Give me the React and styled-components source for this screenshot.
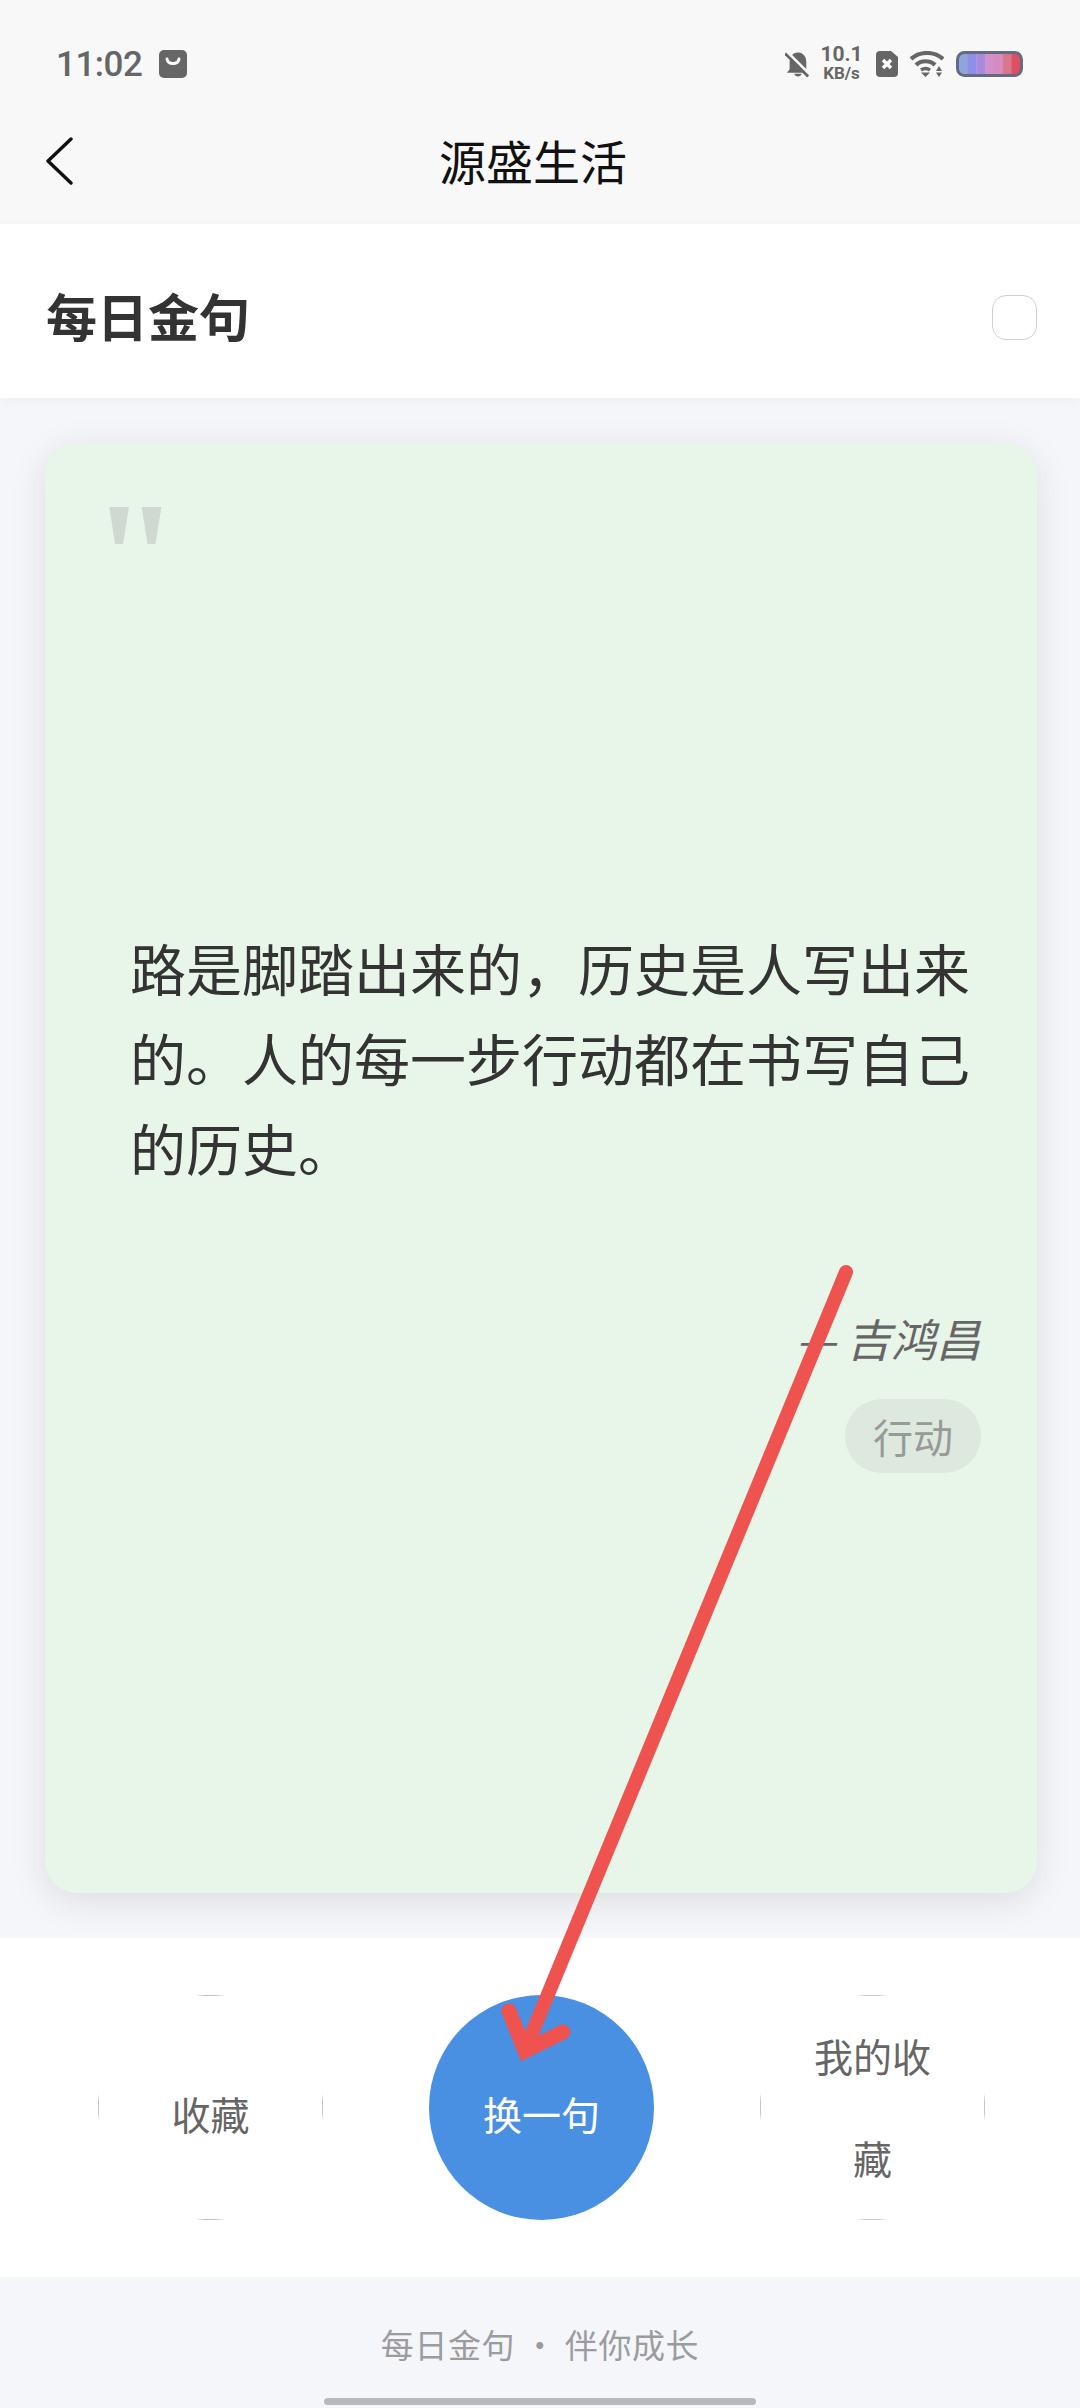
import styled, { createGlobalStyle } from "styled-components";

const GLOBAL = createGlobalStyle`
    html, body {
        margin: 0;
        padding: 0;
        background: #f5f6fa;
    }
    * {
        box-sizing: border-box;
    }
`

const PAGE = styled.div`
    position: relative;
    display: flex;
    flex-direction: column;
    width: 1080px;
    height: 2408px;
    overflow: hidden;
    background: #f5f6fa;
    font-family: "Noto Sans CJK SC", "Noto Sans", sans-serif;
`

const TOPBAR = styled.div`
    display: flex;
    flex-direction: column;
    height: 224px;
    background: #f8f8f8;
`

const STATUSBAR = styled.div`
    display: flex;
    align-items: center;
    justify-content: space-between;
    height: 96px;
    padding: 32px 57px 0 56px;
`

const STATUSLEFT = styled.div`
    display: flex;
    align-items: center;
    gap: 18px;
`

const TIME = styled.span`
    width: 85px;
    font-family: Roboto, sans-serif;
    font-size: 35px;
    font-weight: 500;
    letter-spacing: -0.5px;
    color: #666;
`

const STATUSRIGHT = styled.div`
    display: flex;
    align-items: center;
    gap: 12px;
`

const SPEED = styled.div`
    display: flex;
    flex-direction: column;
    align-items: center;
    width: 39px;
    margin-right: 3px;
    font-family: Roboto, sans-serif;
    font-weight: 700;
    color: #666;
    line-height: 19px;
`

const SPEEDVALUE = styled.span`
    font-size: 21px;
`

const SPEEDUNIT = styled.span`
    font-size: 17px;
`

const NAV = styled.div`
    display: flex;
    align-items: center;
    height: 128px;
    padding-left: 46px;
`

const BACK = styled.svg`
    margin-top: 2px;
`

const NAVTITLE = styled.div`
    width: 188px;
    margin-left: 366px;
    font-size: 47px;
    line-height: 60px;
    color: #111;
    white-space: nowrap;
`

const HEADER = styled.div`
    position: relative;
    display: flex;
    align-items: center;
    justify-content: space-between;
    height: 174px;
    padding: 0 43px 0 46px;
    background: #fff;
    box-shadow: 0 2px 12px rgba(0, 0, 0, 0.04);
`

const HEADING = styled.h1`
    margin: 8px 0 0 0;
    font-size: 51px;
    font-weight: 700;
    line-height: 70px;
    color: #333;
`

const CHECK = styled.div`
    width: 45px;
    height: 45px;
    margin-top: 13px;
    border: 1.5px solid #cfcfcf;
    border-radius: 14px;
    background: #fff;
`

const MAIN = styled.div`
    display: flex;
    height: 1540px;
    padding: 45px 43px 45px 45px;
`

const CARD = styled.div`
    position: relative;
    display: flex;
    flex-direction: column;
    justify-content: center;
    width: 100%;
    padding: 59px 56px 0 85px;
    background: #e8f5e9;
    border-radius: 32px;
    box-shadow: 0 8px 36px rgba(0, 0, 0, 0.1);
`

const QUOTEMARK = styled.span`
    position: absolute;
    left: 47px;
    top: 35px;
    font-family: "Liberation Serif", serif;
    font-size: 156px;
    line-height: 160px;
    font-weight: 700;
    color: #cfd9d1;
`

const QUOTE = styled.p`
    margin: 0 0 116px 0;
    font-size: 56px;
    line-height: 90px;
    color: #333;
`

const AUTHOR = styled.div`
    align-self: flex-end;
    font-size: 45px;
    line-height: 60px;
    font-style: italic;
    color: #666;
`

const TAG = styled.span`
    align-self: flex-end;
    display: flex;
    align-items: center;
    justify-content: center;
    width: 136px;
    height: 74px;
    margin-top: 31px;
    border-radius: 37px;
    background: #dde9df;
    font-size: 40px;
    color: #999;
`

const ACTIONS = styled.div`
    position: relative;
    display: flex;
    align-items: center;
    gap: 106px;
    height: 339px;
    padding-left: 98px;
    background: #fff;
`

const ROUND = styled.button`
    position: relative;
    flex: none;
    width: 225px;
    height: 225px;
    padding: ${(props) => props.$single ? "10px 30px 0" : "0 40px 4px"};
    border: none;
    border-radius: 50%;
    background: ${(props) => props.$primary ? "#4a90e2" : "#fff"};
    color: ${(props) => props.$primary ? "#fff" : "#666"};
    font-family: inherit;
    font-size: 39px;
    line-height: 102px;
`

const TICK = styled.i`
    position: absolute;
    ${(props) => props.$side === "top" && "top: 0; left: 97px; width: 30px; height: 1px;"}
    ${(props) => props.$side === "bottom" && "bottom: 0; left: 97px; width: 30px; height: 1px;"}
    ${(props) => props.$side === "left" && "left: 0; top: 98px; width: 1px; height: 28px;"}
    ${(props) => props.$side === "right" && "right: 0; top: 98px; width: 1px; height: 28px;"}
    background: linear-gradient(
        ${(props) => props.$side === "top" || props.$side === "bottom" ? "to right" : "to bottom"},
        transparent, #c4c4c4 30%, #c4c4c4 70%, transparent
    );
`

const FOOTER = styled.div`
    position: relative;
    display: flex;
    justify-content: center;
    height: 131px;
    padding-top: 43px;
    font-size: 33px;
    line-height: 48px;
    letter-spacing: 0.6px;
    color: #9c9c9f;
    white-space: pre;
`

const HOMEBAR = styled.div`
    position: absolute;
    left: 324px;
    bottom: 3px;
    width: 432px;
    height: 7px;
    border-radius: 4px;
    background: #b8b9bd;
`

const ARROW = styled.svg`
    position: absolute;
    left: 0;
    top: 0;
    pointer-events: none;
`

const BATTERY_BANDS = ["#8fa6dc", "#8e8fe8", "#a98bdc", "#cf90cc", "#d68dbd", "#d5788d", "#df4f62"]

const Ticks = () => (
    <>
        <TICK $side = "top" />
        <TICK $side = "bottom" />
        <TICK $side = "left" />
        <TICK $side = "right" />
    </>
)

function App () {
    return (
        <PAGE>
            <GLOBAL />
            <TOPBAR>
                <STATUSBAR>
                    <STATUSLEFT>
                        <TIME>11:02</TIME>
                        <svg width = "28" height = "28" viewBox = "0 0 28 28">
                            <rect width = "28" height = "28" rx = "5" fill = "#666" />
                            <path d = "M8 9c1 6 11 6 12 0" fill = "none" stroke = "#fff" strokeWidth = "3" strokeLinecap = "round" />
                        </svg>
                    </STATUSLEFT>
                    <STATUSRIGHT>
                        <svg width = "25" height = "27" viewBox = "0 0 27 28">
                            <path d = "M14 1c6 0 9 5 9 10v8l3 4H2l3-4v-8c0-5 3-10 9-10zM10 24h8c-1 4-7 4-8 0z" fill = "#666" />
                            <path d = "M2 0l25 25" stroke = "#f8f8f8" strokeWidth = "3" />
                            <path d = "M0 2l25 25" stroke = "#666" strokeWidth = "3" />
                        </svg>
                        <SPEED>
                            <SPEEDVALUE>10.1</SPEEDVALUE>
                            <SPEEDUNIT>KB/s</SPEEDUNIT>
                        </SPEED>
                        <svg width = "22" height = "26" viewBox = "0 0 22 26">
                            <path d = "M4 0h11l7 6v16a4 4 0 0 1-4 4H4a4 4 0 0 1-4-4V4a4 4 0 0 1 4-4z" fill = "#666" />
                            <path d = "M7 9l8 8M15 9l-8 8" stroke = "#fff" strokeWidth = "3.4" />
                        </svg>
                        <svg width = "34" height = "26" viewBox = "0 0 34 26">
                            <path d = "M1 8c9-8 23-8 32 0" fill = "none" stroke = "#666" strokeWidth = "4.2" />
                            <path d = "M6 14c5-5 14-5 19 0" fill = "none" stroke = "#666" strokeWidth = "4.2" />
                            <path d = "M11 19c3-2 6-2 9 0" fill = "none" stroke = "#666" strokeWidth = "3.6" />
                            <path d = "M11 21.5h9L15.5 26zM29 15l3 5h-6zM26 21.5h6L29 26z" fill = "#666" />
                        </svg>
                        <svg width = "67" height = "26" viewBox = "0 0 67 26">
                            {BATTERY_BANDS.map((color, index) => (
                                <rect key = {index} x = {3 + index * 8.7} y = "2" width = "9" height = "22" fill = {color} />
                            ))}
                            <rect x = "1.5" y = "1.5" width = "64" height = "23" rx = "7" fill = "none" stroke = "#646b80" strokeWidth = "3" />
                        </svg>
                    </STATUSRIGHT>
                </STATUSBAR>
                <NAV>
                    <BACK width = "27" height = "48" viewBox = "0 0 27 48">
                        <path d = "M25 2L2 24l23 22" fill = "none" stroke = "#111" strokeWidth = "3.4" strokeLinecap = "round" strokeLinejoin = "round" />
                    </BACK>
                    <NAVTITLE>源盛生活</NAVTITLE>
                </NAV>
            </TOPBAR>
            <HEADER>
                <HEADING>每日金句</HEADING>
                <CHECK />
            </HEADER>
            <MAIN>
                <CARD>
                    <QUOTEMARK>"</QUOTEMARK>
                    <QUOTE>路是脚踏出来的，历史是人写出来的。人的每一步行动都在书写自己的历史。</QUOTE>
                    <AUTHOR>— 吉鸿昌</AUTHOR>
                    <TAG>行动</TAG>
                </CARD>
            </MAIN>
            <ACTIONS>
                <ROUND $single>收藏<Ticks /></ROUND>
                <ROUND $single $primary>换一句</ROUND>
                <ROUND>我的收藏<Ticks /></ROUND>
            </ACTIONS>
            <FOOTER>每日金句 · 伴你成长</FOOTER>
            <HOMEBAR />
            <ARROW width = "1080" height = "2408" viewBox = "0 0 1080 2408">
                <path d = "M846 1272L525 2050" fill = "none" stroke = "#ef5350" strokeWidth = "14" strokeLinecap = "round" />
                <path d = "M509 2011L525 2051L563 2032" fill = "none" stroke = "#ef5350" strokeWidth = "15" strokeLinecap = "round" strokeLinejoin = "miter" />
            </ARROW>
        </PAGE>
    )
}

export default App
